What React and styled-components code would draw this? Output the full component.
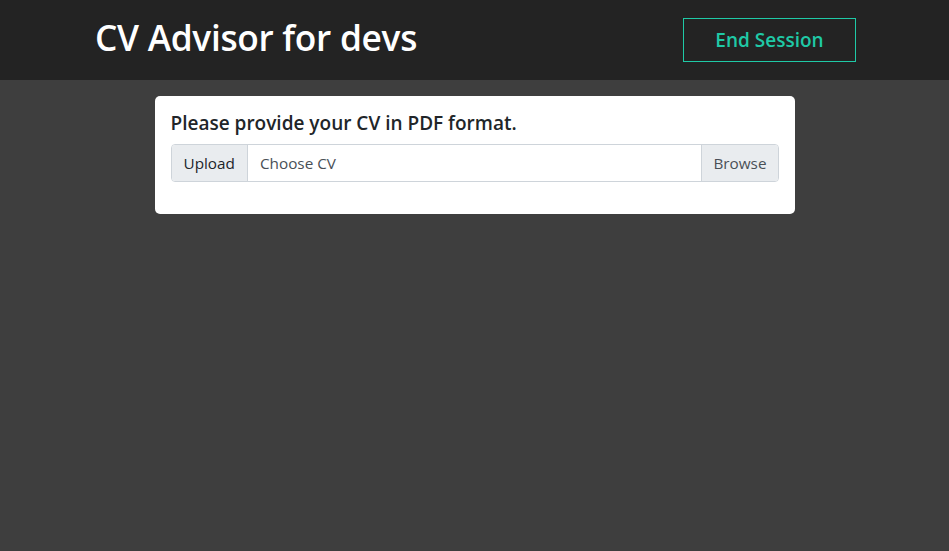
import React from 'react';
import styled, { createGlobalStyle } from 'styled-components';

const GlobalStyle = createGlobalStyle`
  html, body {
    margin: 0;
    padding: 0;
    background: #3e3e3e;
    font-family: "Segoe UI", "Open Sans", "Noto Sans", sans-serif;
  }
  * { box-sizing: border-box; }
`;

const Page = styled.div`
  min-height: 100vh;
  background: #3e3e3e;
`;

const Header = styled.header`
  height: 80px;
  background: #232323;
  display: flex;
  align-items: center;
  justify-content: space-between;
  padding: 0 93px 0 95px;
`;

const Title = styled.h1`
  margin: 0;
  color: #ffffff;
  font-size: 35.3px;
  font-weight: 600;
  letter-spacing: -0.3px;
  line-height: 1;
  padding-bottom: 4px;
`;

const EndButton = styled.button`
  width: 173px;
  height: 44px;
  background: transparent;
  border: 1px solid #1fc9a6;
  color: #1fc9a6;
  font-family: inherit;
  font-size: 19px;
  font-weight: 600;
  cursor: pointer;
`;

const Main = styled.main`
  display: flex;
  justify-content: center;
  padding-top: 16px;
`;

const Card = styled.div`
  width: 640px;
  background: #ffffff;
  border-radius: 5px;
  padding: 16px 16px 32px;
`;

const Prompt = styled.h5`
  margin: 0 0 9px;
  font-size: 19px;
  font-weight: 600;
  color: #212529;
  line-height: 1.2;
`;

const InputGroup = styled.div`
  display: flex;
  height: 38px;
  border: 1px solid #ced4da;
  border-radius: 4px;
  overflow: hidden;
  font-size: 15.3px;
`;

const Addon = styled.div`
  display: flex;
  align-items: center;
  padding: 0 ${p => (p.$side === 'right' ? '11px' : '12px')};
  background: #e9ecef;
  color: ${p => (p.$dark ? '#212529' : '#495057')};
  border-left: ${p => (p.$side === 'right' ? '1px solid #ced4da' : 'none')};
  border-right: ${p => (p.$side === 'left' ? '1px solid #ced4da' : 'none')};
`;

const FileLabel = styled.div`
  flex: 1;
  display: flex;
  align-items: center;
  padding: 0 12px;
  color: #495057;
`;

export default function App() {
  return (
    <Page>
      <GlobalStyle />
      <Header>
        <Title>CV Advisor for devs</Title>
        <EndButton>End Session</EndButton>
      </Header>
      <Main>
        <Card>
          <Prompt>Please provide your CV in PDF format.</Prompt>
          <InputGroup>
            <Addon $side="left" $dark>Upload</Addon>
            <FileLabel>Choose CV</FileLabel>
            <Addon $side="right">Browse</Addon>
          </InputGroup>
        </Card>
      </Main>
    </Page>
  );
}
